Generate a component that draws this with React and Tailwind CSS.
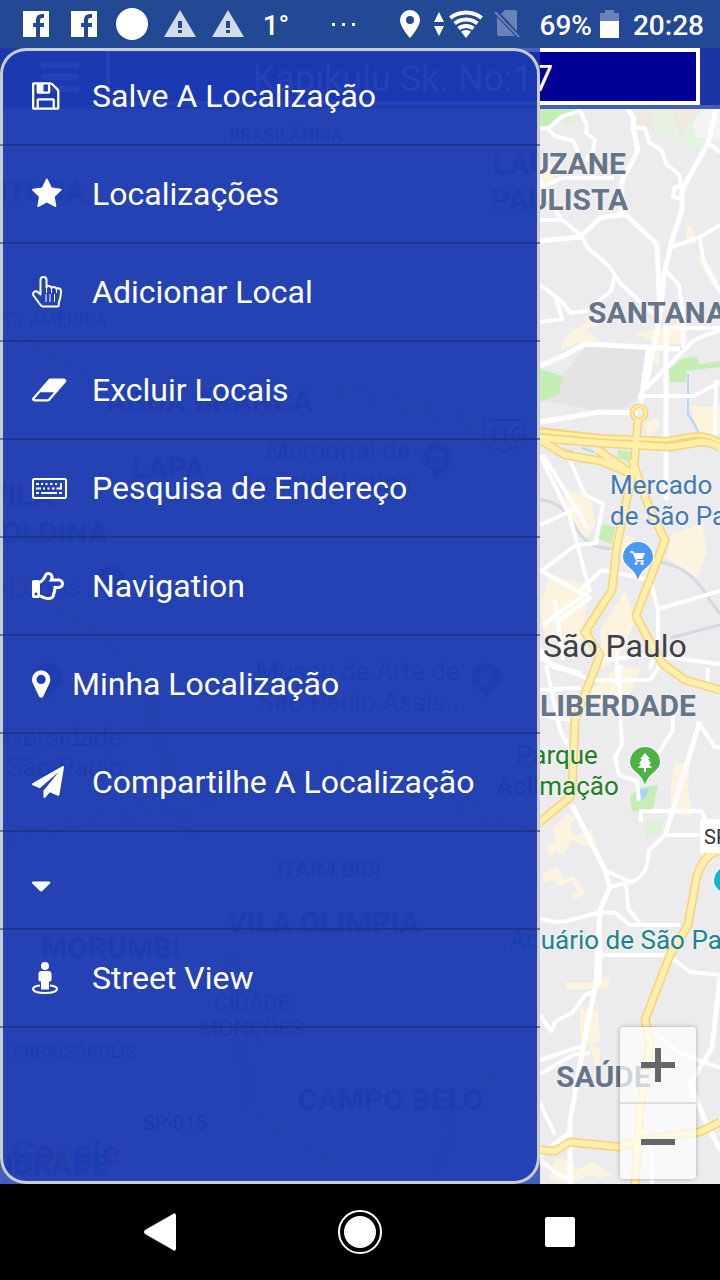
import React, { useState } from 'react';
import { FaRegHandPointRight } from 'react-icons/fa';

const FLOPPY = 'M512 1536h768v-384h-768v384zm896 0h128v-896q0-14-10-38.500t-20-34.500l-281-281q-10-10-34-20t-39-10v416q0 40-28 68t-68 28h-576q-40 0-68-28t-28-68v-416h-128v1280h128v-416q0-40 28-68t68-28h832q40 0 68 28t28 68v416zm-384-928v-320q0-13-9.500-22.500t-22.500-9.500h-192q-13 0-22.500 9.500t-9.500 22.500v320q0 13 9.500 22.500t22.500 9.500h192q13 0 22.500-9.500t9.500-22.500zm640 32v928q0 40-28 68t-68 28h-1344q-40 0-68-28t-28-68v-1344q0-40 28-68t68-28h928q40 0 88 20t76 48l280 280q28 28 48 76t20 88z';
const STAR = 'M1728 647q0 22-26 48l-363 354 86 500q1 7 1 20 0 21-10.500 35.500t-30.500 14.500q-19 0-40-12l-449-236-449 236q-22 12-40 12-21 0-31.500-14.500t-10.500-35.500q0-6 2-20l86-500-364-354q-25-27-25-48 0-37 56-46l502-73 225-455q19-41 49-41t49 41l225 455 502 73q56 9 56 46z';
const ERASER = 'M960 1408l336-384h-768l-336 384h768zm1013-1077q15 34 9.500 71.500t-30.500 65.500l-896 1024q-38 44-96 44h-768q-38 0-69.500-20.500t-47.500-54.500q-15-34-9.500-71.500t30.500-65.500l896-1024q38-44 96-44h768q38 0 69.500 20.500t47.500 54.500z';
const MARKER = 'M1152 640q0-106-75-181t-181-75-181 75-75 181 75 181 181 75 181-75 75-181zm256 0q0 109-33 179l-364 774q-16 33-47.500 52t-67.500 19-67.500-19-46.500-52l-365-774q-33-70-33-179 0-212 150-362t362-150 362 150 150 362z';
const PLANE = 'M1764 11q33 24 27 64l-256 1536q-5 29-32 45-14 8-31 8-11 0-24-5l-453-185-242 295q-18 23-49 23-13 0-22-4-19-7-30.500-23.500t-11.500-36.500v-349l864-1059-1069 925-395-162q-37-14-40-55-2-40 32-59l1664-960q15-9 32-9 20 0 36 11z';
const CARET = 'M1408 704q0 26-19 45l-448 448q-19 19-45 19t-45-19l-448-448q-19-19-19-45t19-45 45-19h896q26 0 45 19t19 45z';

function Glyph({ d, viewBox }) {
  return (
    <svg viewBox={viewBox} className="h-8 w-auto overflow-visible" fill="currentColor" aria-hidden="true">
      <path d={d} />
    </svg>
  );
}

function PointerIcon() {
  return (
    <svg viewBox="0 0 30 32" className="h-8 w-[30px]" fill="none" stroke="currentColor" aria-hidden="true">
      <path d="M8.500 18.500V4a3 3 0 0 1 6 0v7.500q0-1.500 2-1.500 2.700 0 3 2 .5-1 2-1 2.500 0 3 2 .5-.8 1.500-.8 3 0 3 3.300 0 5-1.500 9-.8 2-.8 4.500 0 1.500-1.500 1.500H11q-1.500 0-2.500-1.500L1.500 19.500q-1-2 .5-3.500 1.500-1.300 3.500-.3z" strokeWidth="2" strokeLinejoin="round" />
      <path d="M14.500 11v6M19.500 12v5M24.500 13v4M14 18v8M18 18v8M22.500 18v8" strokeWidth="1" />
    </svg>
  );
}

function KeyboardIcon() {
  return (
    <svg viewBox="0 0 35 21" className="h-[21px] w-[35px]" fill="currentColor" aria-hidden="true">
      <rect x="1" y="1" width="33" height="19" rx="1.500" fill="none" stroke="currentColor" strokeWidth="2" />
      <path d="M4 5h3v2H4zM9 5h2v2H9zM13.500 5h2v2h-2zM18 5h2.500v2H18zM23 5h2v2h-2zM4 9.500h5v2H4zM11 9.500h2v2h-2zM15.500 9.500h2v2h-2zM20 9.500h2.500v2H20zM24.500 9.500H28V5h2v6.500h-5.500zM4 14h3v2H4zM9 14h16v2H9zM27 14h3v2h-3z" />
    </svg>
  );
}

function StreetViewIcon() {
  return (
    <svg viewBox="0 0 26 32" className="h-8 w-[26px]" fill="currentColor" aria-hidden="true">
      <circle cx="13" cy="4" r="4" />
      <path d="M9.500 9h7q3 0 3 3v6q0 1.500-2.500 1.500V27.500H9V19.500q-2.500 0-2.500-1.500v-6q0-3 3-3z" />
      <path d="M8 23.500C3.500 24 1 25.300 1 27c0 2.300 5 4 12 4s12-1.700 12-4c0-1.700-2.500-3-7-3.500" fill="none" stroke="currentColor" strokeWidth="2" />
    </svg>
  );
}

const menuItems = [
  { label: 'Salve A Localização', icon: <Glyph d={FLOPPY} viewBox="128 0 1536 1792" /> },
  { label: 'Localizações', icon: <Glyph d={STAR} viewBox="64 0 1664 1792" /> },
  { label: 'Adicionar Local', icon: <PointerIcon /> },
  { label: 'Excluir Locais', icon: <Glyph d={ERASER} viewBox="64 0 1920 1792" /> },
  { label: 'Pesquisa de Endereço', icon: <KeyboardIcon /> },
  { label: 'Navigation', icon: <FaRegHandPointRight size={32} /> },
  { label: 'Minha Localização', icon: <Glyph d={MARKER} viewBox="384 0 1024 1792" />, narrow: true },
  { label: 'Compartilhe A Localização', icon: <Glyph d={PLANE} viewBox="0 0 1792 1792" /> },
  { label: '', icon: <Glyph d={CARET} viewBox="384 0 1024 1792" />, narrow: true },
  { label: 'Street View', icon: <StreetViewIcon /> },
];

// District and place names, x / y in map pixels (y is the line's centre)
const labelStyles = {
  district: 'text-[30px] font-bold text-[#66758a]',
  area: 'text-[22px] font-medium text-[#66758a]',
  small: 'text-[18px] font-medium text-[#66758a]',
  city: 'text-[32px] text-[#3f3f44]',
  shop: 'text-[26px] text-[#4279ba]',
  park: 'text-[26px] text-[#1f8023]',
  sight: 'text-[26px] text-[#1b858e]',
  place: 'text-[26px] text-[#5d7286]',
  road: 'text-[20px] text-[#333333]',
};

const mapLabels = [
  { text: 'LAUZANE', x: 493, y: 55, kind: 'district' },
  { text: 'PAULISTA', x: 491, y: 91, kind: 'district' },
  { text: 'SANTANA', x: 588, y: 204, kind: 'district' },
  { text: 'Mercado Municipal', x: 610, y: 376, kind: 'shop' },
  { text: 'de São Paulo', x: 610, y: 407, kind: 'shop' },
  { text: 'São Paulo', x: 543, y: 537, kind: 'city' },
  { text: 'LIBERDADE', x: 540, y: 597, kind: 'district' },
  { text: 'Parque', x: 516, y: 646, kind: 'park' },
  { text: 'Aclimação', x: 496, y: 677, kind: 'park' },
  { text: 'Aquário de São Paulo', x: 509, y: 831, kind: 'sight' },
  { text: 'SAÚDE', x: 556, y: 968, kind: 'district' },
  { text: 'BRASILÂNDIA', x: 229, y: 26, kind: 'small' },
  { text: 'PIRITUBA', x: -48, y: 83, kind: 'district' },
  { text: 'CITY AMÉRICA', x: -14, y: 211, kind: 'small' },
  { text: 'ÁGUA BRANCA', x: 106, y: 293, kind: 'district' },
  { text: '116', x: 488, y: 326, kind: 'road' },
  { text: 'Memorial da', x: 266, y: 342, kind: 'place' },
  { text: 'América Latina', x: 238, y: 373, kind: 'place' },
  { text: 'LAPA', x: 131, y: 359, kind: 'district' },
  { text: 'VILA', x: -12, y: 387, kind: 'district' },
  { text: 'LEOPOLDINA', x: -72, y: 424, kind: 'district' },
  { text: 'Villa-Lobos', x: -48, y: 479, kind: 'place' },
  { text: 'Museu de Arte de', x: 256, y: 562, kind: 'place' },
  { text: 'São Paulo Assis...', x: 259, y: 593, kind: 'place' },
  { text: 'Universidade', x: -27, y: 628, kind: 'place' },
  { text: 'de São Paulo', x: -28, y: 658, kind: 'place' },
  { text: 'ITAIM BIBI', x: 277, y: 761, kind: 'area' },
  { text: 'VILA OLIMPIA', x: 227, y: 814, kind: 'district' },
  { text: 'MORUMBI', x: 41, y: 839, kind: 'district' },
  { text: 'CIDADE', x: 214, y: 894, kind: 'area' },
  { text: 'MONÇÕES', x: 199, y: 920, kind: 'area' },
  { text: 'PARAISÓPOLIS', x: 13, y: 943, kind: 'small' },
  { text: 'CAMPO BELO', x: 298, y: 991, kind: 'district' },
  { text: 'SP-015', x: 143, y: 1014, kind: 'road' },
  { text: 'ANDRADE', x: -28, y: 1056, kind: 'district' },
];

const streets = [
  'M540 128h9l12-11 20-7M548 129l7 7 18 5 5 11M581 112l6 14-1 7 9 7-2 12-8 8',
  'M634 128h11l4 14 12 8 6 15 12 9 2 12-7 2-1 9 10 2M708 143l12 9',
  'M540 220h22l18 14 8 14 21 18 12 18 35 32M615 276l-4 15-25 20-15 2-12-14-19-14M555 295l7 24-22 3M540 188l22-10 52 0',
  'M672 247l28-10 20-12M700 238l3 22 17 32M665 270l14 15 4 33 0 30M540 180l20 38',
  'M543 455l37 60M570 460l15 35 18 9-7 39-20 2-36 27M540 525l37-17 10 20M540 455l30 62 20 75M540 570l50 28-35 25M543 625l45-33M555 600l8 60M580 590l22-20 48 10 8 30v30l-8 30M658 609l62-18M600 660l50-5 70 9M617 650v35M540 690l40-2',
  'M620 665v45l2 35-7 12 4 18 18 6 2 20M660 665l-10 15-60 0-50-22M673 715v15l-25 40M641 822v-11h60l7 14M665 835h34M546 665l14 65 10 20M540 715l30 5M708 668l-1 20M700 725l15 22h5',
  'M540 918q16 7 35 1l25-7 15 1 15 12 50 0M611 887l15-4 2 25 12 16M605 870l25 12q18-4 19-32l16-15',
  'M540 1015l11 16 5-10 16-8 13-18 12-4M540 1060l45-15M540 1074l35-20 15-1M555 1135l-15-32M540 1160l20 16 12 3M600 955h68l22 17 30 3M720 1068l-40-15-25-20M640 1130q15 10 12 54',
  'M716 380l-1 56M644 390l50-50 26-10M644 396h50l26-14M670 328h50M600 985v-75',
  'M80 109l-20 80 40 60M180 109l20 90-40 90 60 70M380 146l20 80-30 60 80 90M20 300l90 90-30 120M250 500l30 90 120 30M330 440l30 130-60 110M460 500l-30 100 20 130M180 760l15 160 60 30M420 780l-30 150 80 160M80 1000l-50 140M150 1060l-70 90M330 1000l120 180',
];

const mainStreets = [
  'M628 109l6 10-1 10 5 21-6 12-10 18-1 34M716 109l-8 34-26 47 0 20-10 30-8 35-4 40-12 60-8 24M540 241l40-4 20-19 25-4 32 30 3 70M540 366l25-11 20-11 95 5M666 325v175M648 350l-8 60M540 422l60-10 38 1M700 721l-35 114M540 650l12 16 30 8',
  'M572 805l33 65 5 17-10 23-4 75-8 35-14 80-4 20v64M720 978l-8 70-22 35 14 35 16 32M540 1155l30-22',
];

const highways = [
  'M540 438l60 5 70 4 30-5q12 0 20 6',
  'M540 440l25 15 36 6 33 14M598 450l34 24',
  'M638 420l-4 45-17 80-5 45-27 42 15 23-25 65-3 70-2 7-30 25',
  'M632 460l18 50 15 30-25 65-4 11 14 26 13 22 22 16 35 10',
  'M720 850q-18 5-24 30l-8 45-18 30-25 65 5 22-10 68-5 74',
  'M540 1150l15 1 15-9 50 5 20-7 60-8 20-10',
  'M0 330l120 60 180-10 240 58M0 560l140 110 50 170M540 830l-200-60-340 70M230 950l20 160 130 80M440 1184l10-80 60-40',
];

function MapPin({ x, y, fill, children }) {
  return (
    <g transform={`translate(${x} ${y})`}>
      <path d="M0 25C-3 12-16 10-16 0a16 16 0 1 1 32 0C16 10 3 12 0 25z" fill="#fff" />
      <path d="M0 23C-3 11-15 9-15 0a15 15 0 1 1 30 0C15 9 3 11 0 23z" fill={fill} />
      {children}
    </g>
  );
}

function Museum() {
  return <path d="M0-8l8 4v2H-8v-2zM-6-1h3v6h-3zM-1.500-1h3v6h-3zM3-1h3v6H3zM-8 6H8v2H-8z" fill="#fff" />;
}

function MapCanvas() {
  return (
    <svg viewBox="0 109 720 1075" preserveAspectRatio="xMinYMin slice" className="absolute inset-0 h-full w-full" fill="none" aria-hidden="true">
      <rect y="109" width="720" height="1075" fill="#ecebee" />
      {/* parks, water and built-up blocks */}
      <path d="M565 372l22-26 58 4-2 46-30 18-50-10-22-4z" fill="#e4e4e4" />
      <path d="M645 109h75v40l-22 1-28-12-14-8z" fill="#e5f4e2" />
      <path d="M635 109h15l5 24-18-3zM672 109h28l-20 30z" fill="#efe9e2" />
      <path d="M692 123l14-14h14v32l-24-4z" fill="#f4f4f5" />
      <path d="M540 109h40l-20 9-10 9h-10zM540 369l23 7-4 18-19 8zM669 370l14-12 15-1 1 7 21-3v6l-34 4 0 11h-16zM550 446l23 4v6l-18-1zM618 450l15 2-2 10-14-4zM600 524l15 3-2 17-16-5zM558 598l6-5 5 4-8 7zM638 788l20-3-6 28-20-2-2-14z" fill="#c5eeb5" />
      <path d="M645 822l18-2-2 12-14 6zM562 120l10-6 3 8-10 5z" fill="#dbf2d4" />
      <path d="M637 790l11-2-1 8-6 5z" fill="#a9d4fb" />
      <path d="M688 374v40l12 20M582 448l12 4" stroke="#b5d7f4" strokeWidth="2" />
      <path d="M561 345l10-14 28-15 4 6-18 8 17 12-8 6-18-5-14 7zM635 334l32-8 20-5v22l-27 2-2 20-9-8 3-15zM540 170l15-8v18l-15 5zM686 225l6 1 4 18-10-4zM698 258l6-2 14 26-6 4z" fill="#fdf4e0" />
      <path d="M566 490l24 5 5 30-10 15-22-30zM672 535l30-12 5 30-10 25-30-20zM550 575l40 10-10 60-35-8-5-30zM690 406h30v28h-20zM645 425l14-8v12l-10 8zM615 530l20 8-10 20-15-6zM625 590l10 30-15 35-18 15-2-40z" fill="#fdf4e0" />
      <path d="M545 845l10-3-2-14 14-14 8 4-6 12 8 6 14-7 5 14-10 3-14-6-8 14-10-2-2 8zM542 874l16-8 6 14 10-4 12 18-14 6-2-6 8-3-8-10-8 6-10-7-9 3zM670 790l4-25 16-4-2 25 4 30-20-2zM590 690l30-25 20 5-10 25-30 10zM566 982h26l4-6 14 2-2 10-42 2zM580 1008l18 2 2 30-10 6-10-10zM590 1045l10 5-2 30zM548 1180l8-22 16 3 4 9 16-8 20 12-12 5-10-4-22 9z" fill="#fdf4e0" />
      <path d="M540 500q22 0 35 26t45 22M660 562q30 4 50 38l10 14M670 638l50-13" stroke="#d4dadd" strokeWidth="3" />
      {streets.map((d) => (
        <path key={d} d={d} stroke="#fff" strokeWidth="4" strokeLinejoin="round" />
      ))}
      {mainStreets.map((d) => (
        <path key={d} d={d} stroke="#fff" strokeWidth="5" strokeLinejoin="round" />
      ))}
      {highways.map((d) => (
        <path key={d} d={d} stroke="#f8d374" strokeWidth="9" strokeLinejoin="round" />
      ))}
      <circle cx="639" cy="413" r="7" stroke="#f8d374" strokeWidth="5" />
      <path d="M540 430l60 7 66 3 30-5q14 0 24 7" stroke="#f8d374" strokeWidth="6" />
      {highways.map((d) => (
        <path key={d} d={d} stroke="#ffefac" strokeWidth="6" strokeLinejoin="round" />
      ))}
      <circle cx="639" cy="413" r="7" stroke="#ffefac" strokeWidth="2" />
      <path d="M540 431l60 6 66 3 30-5q14 0 24 7" stroke="#ffefac" strokeWidth="3" />
      <path d="M484 420h40v24l-20 8-20-8z" stroke="#66758a" strokeWidth="2" strokeLinejoin="round" />
      <rect x="700" y="819" width="60" height="34" fill="#fff" />
      <rect x="136" y="1106" width="66" height="34" fill="#fff" />

      <MapPin x={638} y={557} fill="#4b99f4">
        <path d="M-8-5h3L-1 4H6" stroke="#fff" strokeWidth="1.500" />
        <path d="M-5-4H7L4.500 2H-2.500z" fill="#fff" />
        <circle cx="-2" cy="6.500" r="1.500" fill="#fff" />
        <circle cx="4" cy="6.500" r="1.500" fill="#fff" />
      </MapPin>
      <MapPin x={645} y={762} fill="#4cb244">
        <path d="M0-9l5 6H3l3 5H4l3 4H1v4h-2V6h-6l3-4h-2l3-5h-2z" fill="#fff" />
      </MapPin>
      <MapPin x={729} y={881} fill="#12b5cb" />
      <MapPin x={437} y={458} fill="#5d7ba0">
        <Museum />
      </MapPin>
      <MapPin x={486} y={678} fill="#5d7ba0">
        <Museum />
      </MapPin>
      <MapPin x={110} y={580} fill="#5d8a70" />
      <MapPin x={48} y={678} fill="#5d7ba0" />
    </svg>
  );
}

function StatusBar() {
  return (
    <div className="flex h-12 shrink-0 items-center justify-between bg-[#234894] pr-4 pl-5 text-[28px] leading-8 font-medium text-white">
      <div className="flex items-center gap-4">
        <FacebookIcon />
        <FacebookIcon />
        <span className="h-8 w-8 rounded-full bg-white" />
        <WarningIcon />
        <WarningIcon />
        <span className="w-8 pt-1 text-center">1°</span>
        <span className="ml-6 flex gap-[7px]">
          <i className="h-[3px] w-[3px] bg-white" />
          <i className="h-[3px] w-[3px] bg-white" />
          <i className="h-[3px] w-[3px] bg-white" />
        </span>
      </div>
      <div className="flex items-center">
        <svg viewBox="0 0 20 28" className="h-7 w-5" fill="#fff" aria-hidden="true">
          <path fillRule="evenodd" d="M10 0a10 10 0 0 0-10 10c0 7 10 18 10 18s10-11 10-18A10 10 0 0 0 10 0zm0 6a4 4 0 1 1 0 8 4 4 0 0 1 0-8z" />
        </svg>
        <svg viewBox="0 0 52 30" className="ml-[14px] h-[30px] w-[52px]" fill="#fff" aria-hidden="true">
          <path d="M5 3l5 10H0zM5 27l5-10H0z" />
          <clipPath id="wifi">
            <path d="M32 29L14 6Q32-6 50 6z" />
          </clipPath>
          <g clipPath="url(#wifi)">
            <circle cx="32" cy="29" r="8" />
            <g fill="none" stroke="#fff" strokeWidth="4">
              <circle cx="32" cy="29" r="12" />
              <circle cx="32" cy="29" r="18.500" />
              <circle cx="32" cy="29" r="25.500" />
            </g>
          </g>
        </svg>
        <svg viewBox="0 0 26 28" className="ml-2 h-7 w-[26px]" aria-hidden="true">
          <path d="M7 4l4-4h10q2 0 2 2v19zM3 7l18 19H5q-2 0-2-2z" fill="#6b82b8" />
          <path d="M1 2l24 25" stroke="#6b82b8" strokeWidth="2" />
        </svg>
        <span className="ml-5 pt-1">69%</span>
        <svg viewBox="0 0 19 28" className="ml-2 h-7 w-[19px]" aria-hidden="true">
          <path d="M5 0h9v3h5v8H0V3h5z" fill="#6b82b8" />
          <path d="M0 11h19v17H0z" fill="#fff" />
        </svg>
        <span className="ml-[14px] pt-1">20:28</span>
      </div>
    </div>
  );
}

function FacebookIcon() {
  return (
    <svg viewBox="0 0 32 32" className="h-8 w-8" aria-hidden="true">
      <path d="M3 3h26v26H3z" fill="#fff" />
      <path d="M16 29V19h-3v-4h3v-3q0-6 6-6h2v4h-2q-2 0-2 2v3h4v4h-4v10z" fill="#234894" />
    </svg>
  );
}

function WarningIcon() {
  return (
    <svg viewBox="0 0 32 32" className="h-8 w-8" aria-hidden="true">
      <path d="M16 2l16 27H0z" fill="#d3daea" />
      <path d="M14 13h4v7h-4zM14 22h4v3h-4z" fill="#234894" />
    </svg>
  );
}

function Drawer() {
  return (
    <nav className="absolute inset-y-0 left-0 z-20 w-3/4 bg-[#1c3bb2]/80">
      <div className="h-full rounded-[26px] bg-[#1c3bb2]/80 shadow-[inset_0_0_0_3px_#cccccc]">
        <ul>
          {menuItems.map((item, i) => (
            <li key={i} className="h-[98px] border-b-2 border-[#1a2a60]/50">
              <button
                type="button"
                aria-label={item.label || 'Mais opções'}
                className={item.label ? 'flex h-full w-full items-center pl-8 text-left' : 'flex h-full w-full items-center pt-3 pl-8 text-left'}
              >
                <span className={item.narrow ? 'w-10' : 'w-15'}>{item.icon}</span>
                <span className="text-[32px] leading-10">{item.label}</span>
              </button>
            </li>
          ))}
        </ul>
      </div>
    </nav>
  );
}

export default function App() {
  const [address, setAddress] = useState('Kapıkulu Sk. No:17');

  return (
    <div className="flex min-h-screen flex-col bg-black font-[Roboto,sans-serif] text-white">
      <StatusBar />

      <main className="relative flex flex-1 flex-col">
        {/* Address bar */}
        <header className="flex h-[61px] border-b-4 border-[#4361ac] bg-[#1c35a5] pr-5">
          <button type="button" aria-label="Menu" className="flex w-[106px] shrink-0 flex-col items-center justify-center gap-[6px] pl-[14px]">
            <span className="h-[6px] w-[38px] rounded-full bg-white" />
            <span className="h-[6px] w-[38px] rounded-full bg-white" />
            <span className="h-[6px] w-[38px] rounded-full bg-white" />
          </button>
          <input
            type="text"
            aria-label="Endereço"
            value={address}
            onChange={(e) => setAddress(e.target.value)}
            className="min-w-0 flex-1 border-4 border-white bg-[#000099] pt-1 text-center text-[36px] leading-10 text-white outline-none"
          />
        </header>

        {/* Map */}
        <section className="relative flex-1 overflow-hidden bg-[#ecebee]">
          <MapCanvas />
          {mapLabels.map((l) => (
            <span
              key={l.text + l.y}
              style={{ left: l.x, top: l.y }}
              className={`absolute -translate-y-1/2 leading-8 whitespace-nowrap [text-shadow:0_0_3px_#f4f4f6,0_0_3px_#f4f4f6] ${labelStyles[l.kind]}`}
            >
              {l.text}
            </span>
          ))}
          <span className="absolute top-[712px] left-[704px] text-[20px] leading-8 whitespace-nowrap text-[#333333]">SP-010</span>
          <span className="absolute bottom-4 left-3 text-[34px] leading-8 font-medium text-[#4285f4]">
            G<span className="text-[#ea4335]">o</span><span className="text-[#fbbc05]">o</span>g<span className="text-[#34a853]">l</span><span className="text-[#ea4335]">e</span>
          </span>

          <div className="absolute right-6 bottom-[5px] w-[76px] rounded-sm bg-white/70 shadow-[0_0_4px_rgba(0,0,0,0.3)]">
            <button type="button" aria-label="Aumentar zoom" className="flex h-[77px] w-full items-center justify-center border-b-2 border-[#dddddd]">
              <svg viewBox="0 0 34 34" className="h-[34px] w-[34px]" fill="#666" aria-hidden="true">
                <path d="M14 0h6v14h14v6H20v14h-6V20H0v-6h14z" />
              </svg>
            </button>
            <button type="button" aria-label="Diminuir zoom" className="flex h-[75px] w-full items-center justify-center">
              <span className="h-[6px] w-[34px] bg-[#666666]" />
            </button>
          </div>
        </section>

        <Drawer />
      </main>

      {/* System navigation */}
      <footer className="grid h-24 shrink-0 grid-cols-3 bg-black px-[60px]">
        <button type="button" aria-label="Voltar" className="flex items-center justify-center">
          <svg viewBox="0 0 32 38" className="h-[38px] w-8" fill="#fff" aria-hidden="true">
            <path d="M29 1q3-2 3 2v32q0 4-3 2L1 21q-2-2 0-4z" />
          </svg>
        </button>
        <button type="button" aria-label="Início" className="flex items-center justify-center">
          <span className="flex h-11 w-11 items-center justify-center rounded-full border-2 border-white">
            <span className="h-8 w-8 rounded-full bg-white" />
          </span>
        </button>
        <button type="button" aria-label="Recentes" className="flex items-center justify-center">
          <span className="h-[30px] w-[30px] rounded-xs bg-white" />
        </button>
      </footer>
    </div>
  );
}
